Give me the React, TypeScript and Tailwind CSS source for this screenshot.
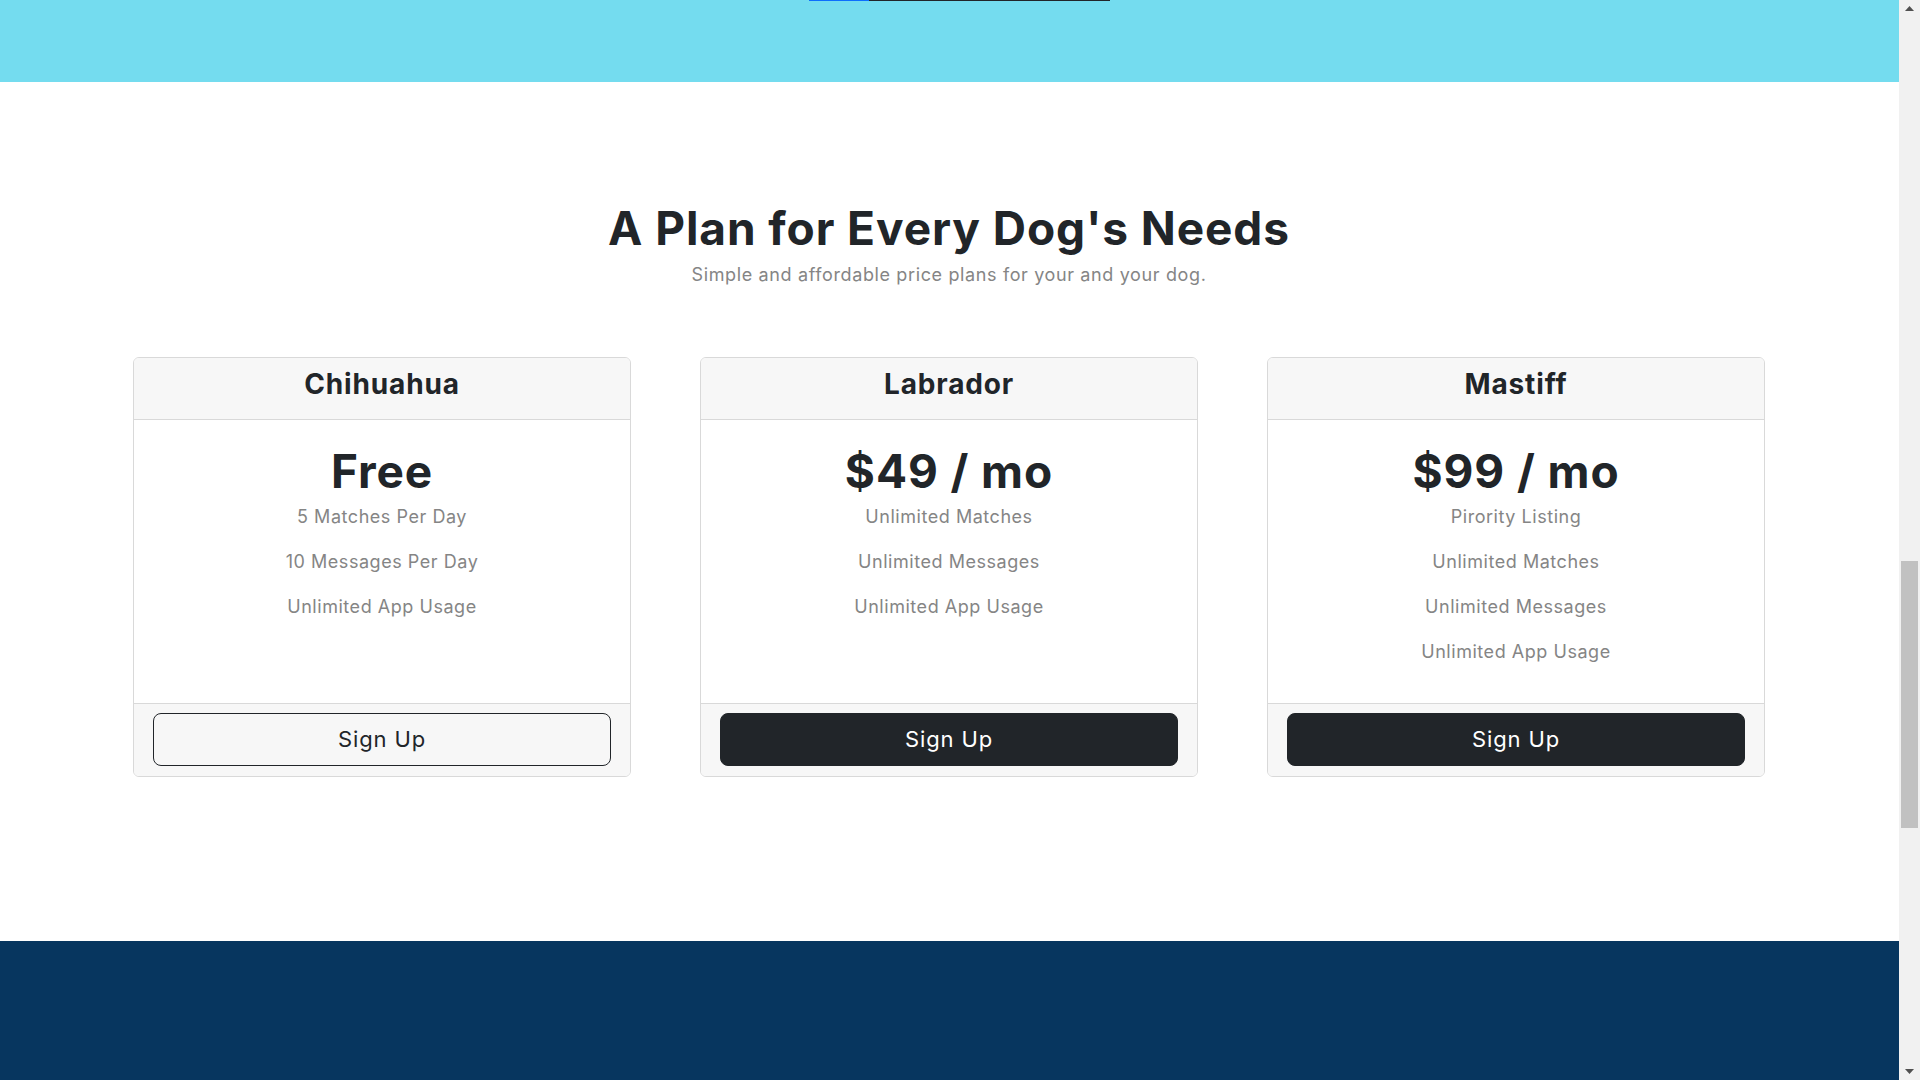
import React from "react";

type Plan = {
  name: string;
  price: string;
  features: string[];
  outline: boolean;
};

const plans: Plan[] = [
  {
    name: "Chihuahua",
    price: "Free",
    features: ["5 Matches Per Day", "10 Messages Per Day", "Unlimited App Usage"],
    outline: true,
  },
  {
    name: "Labrador",
    price: "$49 / mo",
    features: ["Unlimited Matches", "Unlimited Messages", "Unlimited App Usage"],
    outline: false,
  },
  {
    name: "Mastiff",
    price: "$99 / mo",
    features: [
      "Pirority Listing",
      "Unlimited Matches",
      "Unlimited Messages",
      "Unlimited App Usage",
    ],
    outline: false,
  },
];

function PlanCard({ plan }: { plan: Plan }) {
  return (
    <div className="flex flex-col rounded-[6px] border border-[#d9d9d9] bg-white overflow-hidden">
      <div className="h-[62px] bg-[#f7f7f7] border-b border-[#d9d9d9] pt-[9px] text-center">
        <h3 className="text-[28px] leading-[34px] font-bold tracking-[0.03em] text-[#212529]">
          {plan.name}
        </h3>
      </div>
      <div className="h-[283px] pt-[28px] text-center">
        <h1 className="text-[46px] leading-[46px] font-bold tracking-[0.02em] text-[#212529]">
          {plan.price}
        </h1>
        <ul>
          {plan.features.map((f) => (
            <li
              key={f}
              className="text-[18px] leading-[45px] tracking-[0.03em] text-[#858585]"
            >
              {f}
            </li>
          ))}
        </ul>
      </div>
      <div className="bg-[#f7f7f7] border-t border-[#d9d9d9] px-[19px] pt-[9px] pb-[10px]">
        {plan.outline ? (
          <button className="w-full h-[53px] rounded-[8px] border border-[#212529] text-[22px] tracking-[0.04em] text-[#212529] bg-transparent">
            Sign Up
          </button>
        ) : (
          <button className="w-full h-[53px] rounded-[8px] border border-[#212529] text-[22px] tracking-[0.04em] text-white bg-[#212529]">
            Sign Up
          </button>
        )}
      </div>
    </div>
  );
}

function Scrollbar() {
  return (
    <div className="w-[21px] h-[1080px] bg-[#f1f1f1] flex flex-col">
      <div className="h-[17px] flex items-center justify-center">
        <svg width="9" height="5" viewBox="0 0 9 5">
          <polygon points="0,5 4.5,0 9,5" fill="#505050" />
        </svg>
      </div>
      <div className="h-[544px]" />
      <div className="h-[267px] mx-[2px] bg-[#c1c1c1]" />
      <div className="flex-1" />
      <div className="h-[17px] flex items-center justify-center">
        <svg width="9" height="5" viewBox="0 0 9 5">
          <polygon points="0,0 4.5,5 9,0" fill="#505050" />
        </svg>
      </div>
    </div>
  );
}

export default function App() {
  return (
    <div className="flex w-[1920px] h-[1080px] overflow-hidden font-['Inter',sans-serif]">
      <div className="w-[1899px] flex flex-col">
        <section className="h-[82px] bg-[#74dcef]">
          <div className="flex ml-[809px]">
            <div className="w-[60px] h-px bg-[#0d6efd]" />
            <div className="w-[241px] h-px bg-[#212529]" />
          </div>
        </section>
        <section className="h-[859px] bg-white pl-[133px] pr-[134px] pt-[118px]">
          <h2 className="text-center text-[46px] leading-[56px] font-bold tracking-[0.02em] text-[#212529]">
            A Plan for Every Dog's Needs
          </h2>
          <p className="mt-[7px] text-center text-[18px] leading-[24px] tracking-[0.035em] text-[#858585]">
            Simple and affordable price plans for your and your dog.
          </p>
          <div className="mt-[70px] grid grid-cols-3 gap-[69px]">
            {plans.map((p) => (
              <PlanCard key={p.name} plan={p} />
            ))}
          </div>
        </section>
        <section className="flex-1 bg-[#07365f]" />
      </div>
      <Scrollbar />
    </div>
  );
}
